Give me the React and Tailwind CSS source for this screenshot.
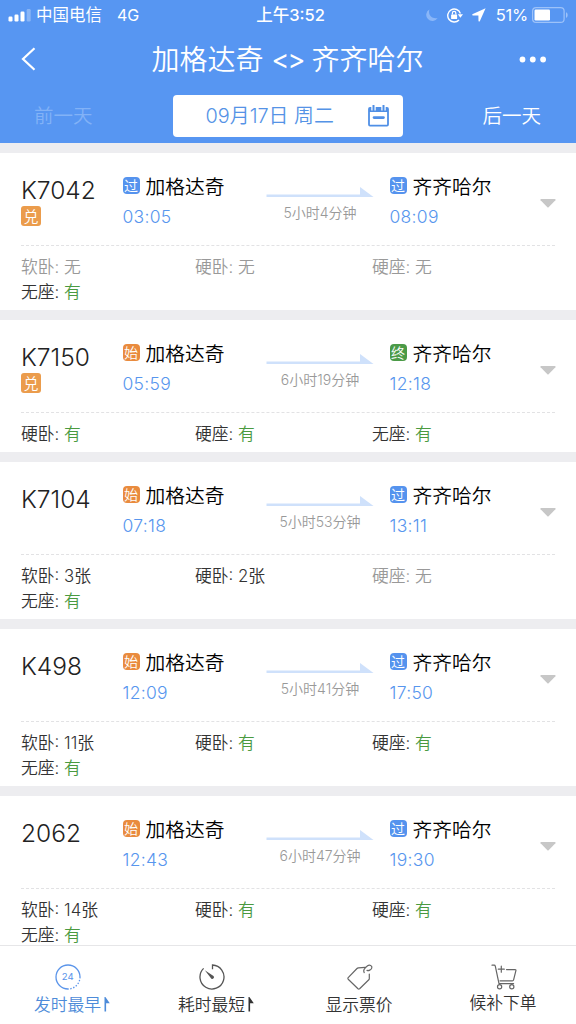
import React, { useState } from "react";

const trains = [
  {
    no: "K7042",
    exchange: true,
    from: "过",
    depart: "03:05",
    to: "过",
    arrive: "08:09",
    duration: "5小时4分钟",
    seats: [["软卧", "无"], ["硬卧", "无"], ["硬座", "无"], ["无座", "有"]],
  },
  {
    no: "K7150",
    exchange: true,
    from: "始",
    depart: "05:59",
    to: "终",
    arrive: "12:18",
    duration: "6小时19分钟",
    seats: [["硬卧", "有"], ["硬座", "有"], ["无座", "有"]],
  },
  {
    no: "K7104",
    from: "始",
    depart: "07:18",
    to: "过",
    arrive: "13:11",
    duration: "5小时53分钟",
    seats: [["软卧", "3张"], ["硬卧", "2张"], ["硬座", "无"], ["无座", "有"]],
  },
  {
    no: "K498",
    from: "始",
    depart: "12:09",
    to: "过",
    arrive: "17:50",
    duration: "5小时41分钟",
    seats: [["软卧", "11张"], ["硬卧", "有"], ["硬座", "有"], ["无座", "有"]],
  },
  {
    no: "2062",
    from: "始",
    depart: "12:43",
    to: "过",
    arrive: "19:30",
    duration: "6小时47分钟",
    seats: [["软卧", "14张"], ["硬卧", "有"], ["硬座", "有"], ["无座", "有"]],
  },
];

const badgeColors = {
  过: "bg-[#5593ee]",
  始: "bg-[#e98b3e]",
  终: "bg-[#4b9a47]",
};

/* =========================
   STATUS BAR
========================== */
function StatusBar() {
  return (
    <div className="grid h-[30px] grid-cols-[1fr_auto_1fr] items-center pl-2 pr-[7px] text-[16.5px] leading-[30px]">
      <div className="flex items-center">
        <svg width="23" height="13" viewBox="0 0 23 13" fill="white">
          <rect x="0.5" y="7.5" width="4" height="5" rx="1.2" />
          <rect x="6.5" y="5.5" width="4" height="7" rx="1.2" />
          <rect x="12.5" y="2.5" width="4" height="10" rx="1.2" />
          <rect x="18.7" y="0" width="4" height="12.5" rx="1.2" opacity="0.3" />
        </svg>
        <span className="ml-[5px]">中国电信</span>
        <span className="ml-[15px] text-base">4G</span>
      </div>
      <div className="pl-1 font-medium">上午3:52</div>
      <div className="flex items-center justify-end">
        <svg width="13" height="13" viewBox="0 0 13 13" fill="#8ab6f8">
          <path d="M4.4 0.5A6.1 6.1 0 1 0 12.6 8.9C8 10.6 2.6 6.4 4.4 0.5Z" />
        </svg>
        <svg className="ml-[9px]" width="16" height="15" viewBox="0 0 16 15" fill="none" stroke="white">
          <path d="M13.4 5.4A6.5 6.5 0 1 0 12 12" strokeWidth="1.4" />
          <path d="M10.8 6.2h5.2l-2.6 3.5z" fill="white" stroke="none" />
          <rect x="4.1" y="6.4" width="6" height="4.6" rx="0.6" fill="white" stroke="none" />
          <path d="M5.4 6.6V5.1a1.7 1.7 0 0 1 3.4 0v1.5" strokeWidth="1.2" />
        </svg>
        <svg className="ml-[9px]" width="14" height="14" viewBox="0 0 14 14" fill="white">
          <path d="M13.6 0.2L0.3 6.2Q0 7.4 1 7.5L6.4 7.6L6.5 13Q7 14 7.8 13.2Z" />
        </svg>
        <span className="ml-2.5 text-[16.5px] tracking-[-0.2px]">51%</span>
        <svg className="ml-1" width="37" height="16" viewBox="0 0 37 16">
          <rect x="0.6" y="0.6" width="31.5" height="14.8" rx="3.5" fill="none" stroke="#9dc2f9" strokeWidth="1.2" />
          <rect x="2.5" y="2.6" width="15.5" height="10.8" rx="1.2" fill="white" />
          <path d="M34 5.2c2.2 0.8 2.2 4.8 0 5.6z" fill="#9dc2f9" />
        </svg>
      </div>
    </div>
  );
}

function Header() {
  return (
    <header className="h-[143px] shrink-0 bg-[#5796f2] text-white">
      <StatusBar />
      <div className="grid h-[58px] grid-cols-[1fr_auto_1fr] items-center pl-[21px] pr-[22px]">
        <svg width="15" height="24" viewBox="0 0 15 24" fill="none" stroke="white" strokeWidth="2.2">
          <path d="M13.5 1.2L2 12l11.5 10.8" />
        </svg>
        <h1 className="flex h-[58px] items-center pt-0.5 text-[28px] font-[350] leading-[56px]">
          加格达奇
          <span className="w-12 text-center text-[27px] font-normal leading-[56px] tracking-[-1.8px]">&lt;&gt;</span>
          齐齐哈尔
        </h1>
        <svg className="mr-[7px] justify-self-end" width="28" height="7" viewBox="0 0 28 7" fill="white">
          <circle cx="3.5" cy="3.5" r="2.9" />
          <circle cx="13.8" cy="3.5" r="2.9" />
          <circle cx="24.1" cy="3.5" r="2.9" />
        </svg>
      </div>
      <div className="mt-[7px] flex h-[42px] items-center justify-between pl-[34px] pr-[35px] text-[19.5px] font-[350]">
        <button className="pt-0.5 text-[#82b2f7]">前一天</button>
        <button className="flex h-[42px] w-[230px] items-center justify-between rounded bg-white pl-[33px] pr-3.5 text-[#5593e6]">
          <span className="pt-0.5 text-[19.9px] font-[350]">09月17日 周二</span>
          <svg width="21" height="22" viewBox="0 0 21 22" fill="none" stroke="#4f8fe6">
            <rect x="1" y="3" width="19" height="17.6" rx="1" strokeWidth="1.8" />
            <path d="M1 5h19" strokeWidth="4" />
            <path d="M5.5 0v5.5M15.5 0v5.5" stroke="white" strokeWidth="4.4" />
            <path d="M5.5 0.5v5M15.5 0.5v5" strokeWidth="2" strokeLinecap="round" />
            <path d="M6 12.6h9.5" strokeWidth="2.6" strokeLinecap="round" />
          </svg>
        </button>
        <button className="pt-0.5">后一天</button>
      </div>
    </header>
  );
}

function Station({ type, name, time }) {
  return (
    <div className="pl-[0.5px] pt-5">
      <div className="flex h-7 items-center">
        <span
          className={`mb-[3px] flex size-[17px] items-center justify-center rounded-[4px] pt-px text-[14px] font-[350] leading-none text-white ${badgeColors[type]}`}
        >
          {type}
        </span>
        <span className="ml-1.5 text-[19.75px] font-[350] leading-7 text-black">{name}</span>
      </div>
      <div className="h-8 text-[17.5px] font-[350] leading-8 tracking-[0.3px] text-[#5796ee]">{time}</div>
    </div>
  );
}

function Seat({ label, value }) {
  const none = value === "无";
  return (
    <div className={none ? "text-[#999]" : "text-[#333]"}>
      {label}: <span className={value === "有" ? "text-[#4a9a40]" : ""}>{value}</span>
    </div>
  );
}

function TrainCard({ train }) {
  return (
    <div className="shrink-0 bg-white px-[21px] pb-1">
      <div className="grid h-[93px] grid-cols-[101px_144px_123px_1fr_16px] border-b border-dashed border-[#e2e2e4]">
        <div className="pt-[21px]">
          <div className="h-8 text-[24.5px] font-light leading-8 text-[#222]">{train.no}</div>
          {train.exchange && (
            <div className="flex size-5 items-center justify-center rounded-[3px] bg-[#eb9c4c] text-[15px] font-[350] leading-none text-white">
              兑
            </div>
          )}
        </div>
        <Station type={train.from} name="加格达奇" time={train.depart} />
        <div className="pt-[34px]">
          <svg width="108" height="11" viewBox="0 0 108 11" fill="#cfe1fb">
            <path d="M0.5 7.4h93.5V0l13.5 10H0.5z" />
          </svg>
          <div className="w-[108px] text-center text-[14px] font-[350] leading-[30px] text-[#999]">
            {train.duration}
          </div>
        </div>
        <Station type={train.to} name="齐齐哈尔" time={train.arrive} />
        <svg className="-mr-px ml-px mt-[46px]" width="16" height="9" viewBox="0 0 16 9" fill="#c7c7c7">
          <path d="M1 0h14q1 0.3 0.4 1.2L8.6 8.3q-0.6 0.5-1.2 0L0.6 1.2Q0 0.3 1 0z" />
        </svg>
      </div>
      <div className="grid grid-cols-[174px_177px_1fr] pb-px pt-[9px] text-[16.8px] font-[350] leading-[25px]">
        {train.seats.map(([label, value]) => (
          <Seat key={label} label={label} value={value} />
        ))}
      </div>
    </div>
  );
}

/* =========================
   BOTTOM TABS
========================== */
function ClockIcon() {
  return (
    <svg width="26" height="26" viewBox="0 0 26 26" fill="none" stroke="#5b95ea" strokeWidth="1.3">
      <path d="M25 13A12 12 0 1 0 13 25" />
      <path d="M25 13A12 12 0 0 1 13 25" strokeDasharray="1.4 1.6" />
      <text x="12.7" y="16.4" textAnchor="middle" fontSize="9.6" fontWeight="400" fill="#5b95ea" stroke="none">24</text>
    </svg>
  );
}

function TimerIcon() {
  return (
    <svg width="26" height="26" viewBox="0 0 26 26" fill="none" stroke="#555" strokeWidth="1.3">
      <path d="M4.6 4.4A12 12 0 1 0 13.5 1v4.2" />
      <path d="M5.8 6.2L14.5 12A1.6 1.6 0 0 1 12.2 14.4Z" fill="#555" stroke="none" />
    </svg>
  );
}

function TagIcon() {
  return (
    <svg width="26" height="26" viewBox="0 0 26 26" fill="none" stroke="#666" strokeWidth="1.2" strokeLinecap="round" strokeLinejoin="round">
      <path d="M18.2 3.4L11.4 3.8Q10.6 3.9 10 4.5L1.2 13.6Q0.6 14.4 1.2 15.2L11 24.8Q11.8 25.4 12.6 24.8L21.8 15.8Q22.3 15.2 22.3 14.4V10" />
      <path d="M17.2 8.6C15.8 6.4 18.4 3.4 20.6 1.8C22.6 0.4 25.4 1.6 24.8 3.8C24.2 6 21.6 7 20 6.4" />
    </svg>
  );
}

function CartIcon() {
  return (
    <svg width="26" height="26" viewBox="0 0 26 26" fill="none" stroke="#666" strokeWidth="1.2" strokeLinecap="round" strokeLinejoin="round">
      <path d="M1 1.2h2.2Q4 1.2 4.3 2.2L8 19.6h14.6" />
      <path d="M15.5 5.6h8.6q1 0 0.8 1L22.6 15.8q-0.3 1-1.2 1H9" />
      <path d="M10.3 2.2v6M7.3 5.2h6" />
      <circle cx="8.6" cy="22.8" r="2.1" />
      <circle cx="20.8" cy="22.8" r="2.1" />
    </svg>
  );
}

const tabs = [
  { label: "发时最早", Icon: ClockIcon, sort: true },
  { label: "耗时最短", Icon: TimerIcon, sort: true },
  { label: "显示票价", Icon: TagIcon },
  { label: "候补下单", Icon: CartIcon, raised: true },
];

function TabBar() {
  const [active, setActive] = useState(0);

  return (
    <nav className="grid h-[79px] shrink-0 grid-cols-4 border-t border-[#e6e6e8] bg-white">
      {tabs.map(({ label, Icon, sort, raised }, i) => (
        <button
          key={label}
          onClick={() => setActive(i)}
          className={`flex flex-col items-center pt-[18px] text-[16.75px] font-[350] ${i === active ? "text-[#4d8bd9]" : "text-[#333]"}`}
        >
          <span className={sort ? "-ml-2" : ""}>
            <Icon />
          </span>
          <span className={`flex h-7 items-center leading-7 ${raised ? "-mt-px" : "mt-px"} ${sort ? "" : "-ml-0.5"}`}>
            {label}
            {sort && (
              <svg className="mb-px ml-[3px]" width="6" height="15" viewBox="0 0 6 15" fill="currentColor">
                <path d="M0.5 0H1.4L5.8 6.2H2.1V14.5H0.5z" />
              </svg>
            )}
          </span>
        </button>
      ))}
    </nav>
  );
}

function App() {
  return (
    <div className="flex h-screen w-full flex-col overflow-hidden bg-[#ededf0] font-[Inter,'Noto_Sans_CJK_SC',sans-serif]">
      <Header />
      <main className="flex min-h-0 flex-1 flex-col gap-[10px] overflow-hidden pt-[10px]">
        {trains.map((train) => (
          <TrainCard key={train.no} train={train} />
        ))}
      </main>
      <TabBar />
    </div>
  );
}

export default App;
